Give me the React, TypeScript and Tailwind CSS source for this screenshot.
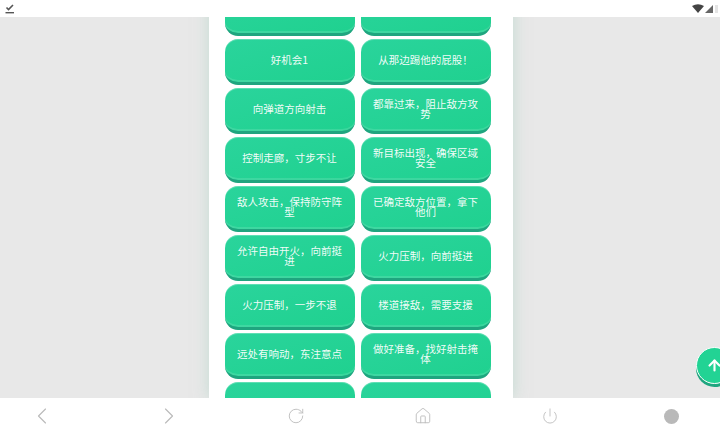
import React from "react";
import { ChevronLeft, ChevronRight, RotateCw, Home, Power, ArrowUp } from "lucide-react";

const rows: string[][] = [
  ["", ""],
  ["好机会1", "从那边踢他的屁股！"],
  ["向弹道方向射击", "都靠过来，阻止敌方攻势"],
  ["控制走廊，寸步不让", "新目标出现，确保区域安全"],
  ["敌人攻击，保持防守阵型", "已确定敌方位置，拿下他们"],
  ["允许自由开火，向前挺进", "火力压制，向前挺进"],
  ["火力压制，一步不退", "楼道接敌，需要支援"],
  ["远处有响动，东注意点", "做好准备，找好射击掩体"],
  ["", ""],
];

const SoundButton = ({ label }: { label: string }) => {
  return (
    <button className="flex h-[46px] w-[130px] shrink-0 items-center justify-center rounded-[13px] border-b-[3px] border-[#1fa57f] bg-gradient-to-br from-[#2ad49c] to-[#1fd18f] px-[10px] pb-[1px] text-center text-[10.5px] leading-[10px] text-white/95 shadow-[inset_0_1px_0_rgba(255,255,255,0.25),inset_0_-2px_0_rgba(255,255,255,0.12)]">
      {label}
    </button>
  );
};

export default function App() {
  return (
    <div
      className="flex h-[434px] w-[720px] flex-col overflow-hidden bg-white"
      style={{ fontFamily: '"Noto Sans CJK SC", "Liberation Sans", sans-serif' }}
    >
      <div className="flex h-[17px] shrink-0 items-center justify-between bg-white pl-[5px] pr-[2px]">
        <svg width="10" height="10" viewBox="0 0 10 10" className="text-[#555]">
          <path d="M1.5 3.5 L3.5 5.5 L8 1" fill="none" stroke="currentColor" strokeWidth="1.6" />
          <rect x="0.5" y="8" width="8.5" height="1.4" fill="currentColor" />
        </svg>
        <div className="flex items-center gap-[1px]">
          <svg width="12" height="9" viewBox="0 0 12 9">
            <path d="M0 2 Q6 -1.5 12 2 L6 9 Z" fill="#444" />
          </svg>
          <svg width="8" height="8" viewBox="0 0 8 8">
            <path d="M8 0 V8 H0 Z" fill="#666" />
          </svg>
          <div className="ml-[1px] h-[8px] w-[3px] bg-[#e4e4e4]" />
        </div>
      </div>

      <div className="relative flex h-[381px] shrink-0 justify-center overflow-hidden bg-[#e8e8e8]">
        <div className="ml-[1px] -mt-[27px] flex w-[304px] shrink-0 flex-col gap-[3px] bg-white pl-[16px] shadow-[0_0_14px_rgba(170,210,195,0.6)]">
          {rows.map((row, i) => (
            <div key={i} className="flex gap-[6px]">
              <SoundButton label={row[0]} />
              <SoundButton label={row[1]} />
            </div>
          ))}
        </div>
        <div className="absolute left-[696px] top-[330px] flex h-[37px] w-[37px] items-center justify-center rounded-full border border-white bg-[#22d394] shadow-[0_3px_0_#1fa57f]">
          <ArrowUp size={17} strokeWidth={3} className="text-white" />
        </div>
      </div>

      <div className="flex flex-1 items-center gap-[107px] bg-white pl-[32px]">
        <ChevronLeft size={20} strokeWidth={1} className="shrink-0 scale-[1.4] text-[#bbb]" />
        <ChevronRight size={20} strokeWidth={1} className="shrink-0 scale-[1.4] text-[#bbb]" />
        <RotateCw size={20} strokeWidth={1.2} className="shrink-0 scale-[0.9] text-[#bbb]" />
        <Home size={20} strokeWidth={1.2} className="shrink-0 scale-[0.9] text-[#bbb]" />
        <Power size={20} strokeWidth={1.2} className="shrink-0 scale-[0.85] text-[#bbb]" />
        <div className="-ml-[3px] h-[15px] w-[15px] shrink-0 rounded-full bg-[#b9b9b9]" />
      </div>
    </div>
  );
}
